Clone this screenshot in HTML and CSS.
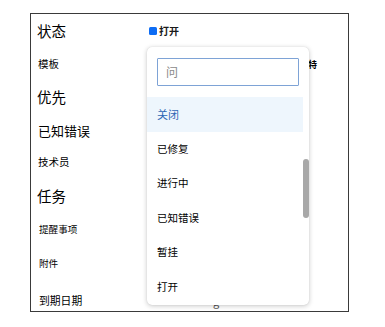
FILE: index.html
```html
<!DOCTYPE html>
<html lang="zh">
<head>
<meta charset="utf-8">
<link rel="stylesheet" href="styles.css">
</head>
<body>
<div class="panel">
  <div class="row r1"><span class="lbl big">状态</span><span class="val status"><i class="sq"></i>打开</span></div>
  <div class="row r2"><span class="lbl small">模板</span><span class="val tey">特</span></div>
  <div class="row r3"><span class="lbl big">优先</span></div>
  <div class="row r4"><span class="lbl mid">已知错误</span></div>
  <div class="row r5"><span class="lbl small">技术员</span></div>
  <div class="row r6"><span class="lbl big">任务</span></div>
  <div class="row r7"><span class="lbl tiny">提醒事项</span></div>
  <div class="row r8"><span class="lbl tiny">附件</span></div>
  <div class="row r9"><span class="lbl small2">到期日期</span><span class="val peek">g</span></div>

  <div class="dropdown">
    <div class="search"><span class="ph">问</span></div>
    <ul class="list">
      <li class="item active">关闭</li>
      <li class="item">已修复</li>
      <li class="item">进行中</li>
      <li class="item">已知错误</li>
      <li class="item">暂挂</li>
      <li class="item">打开</li>
    </ul>
    <div class="scroll"></div>
  </div>
</div>
</body>
</html>
```

FILE: styles.css
```css
html, body {
  margin: 0;
  padding: 0;
  background: #ffffff;
}
body {
  font-family: "Noto Sans CJK SC", "Noto Sans", sans-serif;
  color: #000000;
}
.panel {
  position: relative;
  margin: 13px 0 0 30px;
  width: 317px;
  height: 297px;
  border: 1px solid #3a3a3a;
  display: flex;
  flex-direction: column;
}
.row {
  display: flex;
  align-items: center;
  padding-left: 6px;
  flex: none;
}
.r1 { height: 34px; }
.r2 { height: 33px; }
.r3 { height: 33px; }
.r4 { height: 32px; }
.r5 { height: 33px; }
.r6 { height: 34px; }
.r7 { height: 33px; }
.r8 { height: 35px; }
.r9 { height: 30px; padding-top: 8px; box-sizing: border-box; }
.lbl {
  display: inline-block;
  width: 112px;
  line-height: 1;
  white-space: nowrap;
  font-weight: 400;
}
.big { font-size: 14.5px; }
.mid { font-size: 13px; padding-left: 1px; }
.small { font-size: 10.5px; padding-left: 1px; }
.small2 { font-size: 10.8px; padding-left: 2px; }
.tiny { font-size: 9.6px; padding-left: 2px; }
.val {
  line-height: 1;
  white-space: nowrap;
}
.status {
  display: flex;
  align-items: center;
  font-size: 10px;
  font-weight: 700;
  color: #1a1a1a;
}
.sq {
  display: inline-block;
  width: 8px;
  height: 8px;
  background: #0d6cf4;
  border-radius: 1.5px;
  margin-right: 2px;
}
.tey {
  font-size: 9px;
  font-weight: 700;
  margin-left: 158px;
}
.peek {
  font-size: 11px;
  margin-left: 62px;
  margin-top: 3px;
  color: #555;
}
.dropdown {
  position: absolute;
  left: 116px;
  top: 33px;
  width: 162px;
  height: 258px;
  background: #ffffff;
  border-radius: 5px;
  box-shadow: 0 1px 5px rgba(0, 0, 0, 0.22), 0 0 1px rgba(0, 0, 0, 0.15);
  overflow: hidden;
}
.search {
  margin: 11px 10px 0 10px;
  height: 28px;
  box-sizing: border-box;
  border: 1.5px solid #7ea3d6;
  border-radius: 1px;
  display: flex;
  align-items: center;
  padding-left: 8px;
}
.ph {
  font-size: 12px;
  color: #8a8a8a;
  line-height: 1;
}
.list {
  list-style: none;
  margin: 11px 6px 0 0;
  padding: 0;
}
.item {
  height: 34.5px;
  display: flex;
  align-items: center;
  padding-left: 10px;
  font-size: 10.5px;
  line-height: 1;
  font-weight: 400;
  color: #000000;
}
.item.active {
  background: #eef6fd;
  color: #2f66b5;
  font-size: 11px;
}
.scroll {
  position: absolute;
  right: 0;
  top: 112px;
  width: 6px;
  height: 59px;
  border-radius: 3px;
  background: #a8a8a8;
}
```
